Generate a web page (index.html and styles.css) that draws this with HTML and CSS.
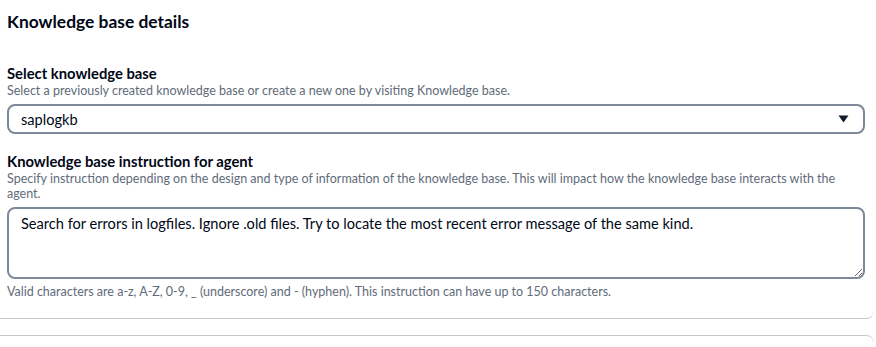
FILE: index.html
```html
<!DOCTYPE html>
<html lang="en">
<head>
    <meta charset="UTF-8">
    <title>Knowledge base details</title>
    <link rel="stylesheet" href="styles.css">
</head>
<body>
    <div class="panel">
        <h2 class="panel-title">Knowledge base details</h2>

        <div class="field">
            <label class="field-label" for="kbSelect">Select knowledge base</label>
            <p class="field-desc">Select a previously created knowledge base or create a new one by visiting Knowledge base.</p>
            <div class="select" id="kbSelect">
                <span class="select-value">saplogkb</span>
                <svg class="select-caret" width="11" height="8" viewBox="0 0 11 8">
                    <polygon points="0.5,0.5 10.5,0.5 5.5,7.5" fill="#0f1b2a"/>
                </svg>
            </div>
        </div>

        <div class="field">
            <label class="field-label" for="kbInstruction">Knowledge base instruction for agent</label>
            <p class="field-desc">Specify instruction depending on the design and type of information of the knowledge base. This will impact how the knowledge base interacts with the agent.</p>
            <textarea id="kbInstruction" class="textarea">Search for errors in logfiles. Ignore .old files. Try to locate the most recent error message of the same kind.</textarea>
            <p class="field-hint">Valid characters are a-z, A-Z, 0-9, _ (underscore) and - (hyphen). This instruction can have up to 150 characters.</p>
        </div>
    </div>
    <div class="panel-bottom"></div>
    <div class="panel-next"></div>
</body>
</html>
```

FILE: styles.css
```css
* {
    box-sizing: border-box;
    margin: 0;
    padding: 0;
}

body {
    font-family: 'Lato', 'Open Sans', sans-serif;
    background: #ffffff;
    color: #000716;
    width: 876px;
    overflow: hidden;
}

.panel {
    padding: 12px 11px 0 7px;
}

.panel-title {
    font-size: 17.4px;
    font-weight: 700;
    line-height: 20px;
    margin-bottom: 31px;
}

.field + .field {
    margin-top: 17px;
}

.field-label {
    display: block;
    font-size: 14.8px;
    font-weight: 700;
    line-height: 20px;
}

.field-desc {
    font-size: 12.5px;
    line-height: 15px;
    color: #5f6b7a;
    margin-bottom: 6px;
}

.select {
    display: flex;
    align-items: center;
    justify-content: space-between;
    height: 30px;
    border: 2px solid #7d8998;
    border-radius: 8px;
    padding: 0 14px 0 12px;
    font-size: 14.6px;
}

.select-caret {
    display: block;
}

.textarea {
    display: block;
    width: 100%;
    height: 72px;
    border: 2px solid #7d8998;
    border-radius: 8px;
    padding: 5px 12px;
    font-family: inherit;
    font-size: 14.6px;
    line-height: 20px;
    color: #000716;
    resize: vertical;
}

.field-hint {
    font-size: 12.5px;
    line-height: 15px;
    color: #5f6b7a;
    margin-top: 5px;
}

.panel-bottom {
    margin-top: 12px;
    height: 8px;
    border-bottom: 1px solid #c6c6cd;
    border-bottom-right-radius: 8px;
    margin-right: 2px;
}

.panel-next {
    margin-top: 16px;
    height: 12px;
    border-top: 1px solid #c6c6cd;
    border-top-right-radius: 8px;
    margin-right: 2px;
}
```
